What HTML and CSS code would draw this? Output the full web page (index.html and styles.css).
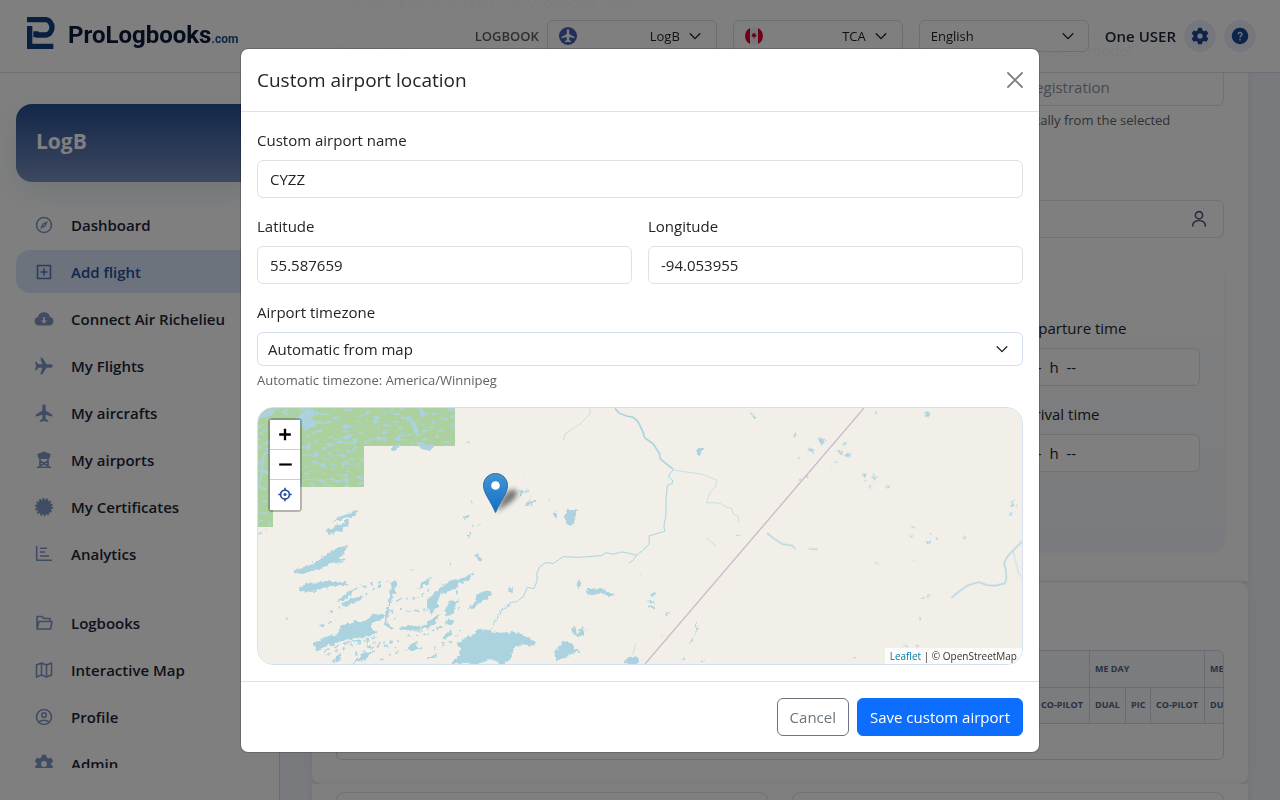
FILE: index.html
```html
<!DOCTYPE html>
<html lang="en">
<head>
<meta charset="utf-8">
<title>ProLogbooks.com – Add flight</title>
<link rel="stylesheet" href="styles.css">
</head>
<body>
<svg width="0" height="0" class="defs" aria-hidden="true">
  <symbol id="chev" viewBox="0 0 16 16"><path d="M2.500 5.500 8 11l5.500-5.500" fill="none" stroke="currentColor" stroke-width="1.600" stroke-linecap="round" stroke-linejoin="round"/></symbol>
  <symbol id="plane" viewBox="0 0 24 24"><path d="M14 8.900 22 14v2.500l-8-2.400V19l3 2v1.800L12 21.500 7 22.800V21l3-2v-4.900L2 16.500V14l8-5.100V3.500a2 2 0 0 1 4 0z" fill="currentColor"/></symbol>
  <symbol id="gear" viewBox="0 0 24 24"><path fill="currentColor" fill-rule="evenodd" d="M9.500 1h5l.8 3.300 2 1.200 3.300-1 2.500 4.300-2.500 2.400v1.600l2.500 2.400-2.500 4.300-3.300-1-2 1.200-.8 3.300h-5l-.8-3.300-2-1.200-3.300 1-2.500-4.300 2.500-2.400v-1.600L.9 8.800l2.500-4.300 3.300 1 2-1.200zM12 8.500a3.500 3.500 0 1 0 0 7 3.500 3.500 0 0 0 0-7z"/></symbol>
</svg>

<header class="topbar">
  <a class="brand" href="#" aria-label="ProLogbooks.com">
    <svg class="brand-mark" viewBox="78 48 90 102" aria-hidden="true"><path d="M81 59H136a20 23 0 0 1 0 46H108M108 94v18M89 78V139H160" fill="none" stroke="#123f80" stroke-width="16"/></svg>
    <span class="brand-name">ProLogbooks<span class="brand-tld">.com</span></span>
  </a>
  <div class="tools">
    <div class="picker">
      <span class="picker-label">LOGBOOK</span>
      <button class="drop" type="button">
        <svg class="flag" viewBox="0 0 18 18" aria-hidden="true"><circle cx="9" cy="9" r="9" fill="#4460b0"/><path d="M9 2c.8 0 1.200 1 1.200 2v3l5.300 3v1.300l-5.300-1.300v3l2 1.500v1L9 14.800l-3.200.7v-1l2-1.500v-3l-5.300 1.300V10l5.300-3V4c0-1 .4-2 1.200-2z" fill="#fff"/></svg>
        <span class="drop-text">LogB</span>
        <svg class="chev"><use href="#chev"/></svg>
      </button>
    </div>
    <button class="drop" type="button">
      <svg class="flag" viewBox="0 0 18 18" aria-hidden="true"><circle cx="9" cy="9" r="9" fill="#eef0f4"/><path d="M5 1a9 9 0 0 0 0 16zM13 1a9 9 0 0 1 0 16z" fill="#e0002a"/><path d="m9 5.500.8 1.300 1-.3-.2 1.300 1 .7-1.400 1.600-.9.1V12h-.6v-1.800l-.9-.1-1.400-1.600 1-.7-.2-1.300 1 .3z" fill="#e0002a"/></svg>
      <span class="drop-text">TCA</span>
      <svg class="chev"><use href="#chev"/></svg>
    </button>
    <span class="select-wrap">
      <select class="lang" aria-label="Language"><option>English</option></select>
      <svg class="chev"><use href="#chev"/></svg>
    </span>
    <div class="account">
      <span class="user">One USER</span>
      <button class="round" type="button" aria-label="Settings"><svg viewBox="0 0 24 24"><use href="#gear"/></svg></button>
      <button class="round" type="button" aria-label="Help"><svg viewBox="0 0 24 24"><circle cx="12" cy="12" r="11" fill="currentColor"/><path d="M9.500 9.700a2.500 2.500 0 1 1 3.800 2.200c-.9.500-1.300.9-1.300 2M12 16v2" stroke="#dfe6f6" stroke-width="2" fill="none"/></svg></button>
    </div>
  </div>
</header>

<div class="shell">
  <aside class="sidebar">
    <div class="book">LogB</div>
    <nav class="nav">
      <a href="#"><svg viewBox="0 0 20 20"><circle cx="10" cy="10" r="7.500" class="ln"/><path fill="currentColor" fill-rule="evenodd" d="m14 6-2.500 5.500L6 14l2.500-5.500zM10 9.200a.8.800 0 1 0 0 1.600.8.800 0 0 0 0-1.600z"/></svg>Dashboard</a>
      <a href="#" class="active"><svg viewBox="0 0 20 20"><path class="ln" d="M3.500 3.500h13v13h-13zM10 6.500v7M6.500 10h7"/></svg>Add flight</a>
      <a href="#"><svg viewBox="0 0 20 20"><path fill="currentColor" fill-rule="evenodd" d="M5 16.500a4.300 4.300 0 0 1-1-8.500 6.200 6.200 0 0 1 12 0 4.300 4.300 0 0 1-1 8.500zM9.200 8v3.500H7l3 3 3-3h-2.200V8z"/></svg>Connect Air Richelieu</a>
      <a href="#"><svg viewBox="0 0 24 24" class="east"><use href="#plane"/></svg>My Flights</a>
      <a href="#"><svg viewBox="0 0 24 24"><use href="#plane"/></svg>My aircrafts</a>
      <a href="#"><svg viewBox="0 0 20 20"><path fill="currentColor" d="M10 1.500 16.500 4v2L15 9H5L3.500 6V4zM3 16.500h14V18H3z"/><path class="ln" d="M6 9v8M14 9v8M6 11l8 5M14 11l-8 5"/></svg>My airports</a>
      <a href="#"><svg viewBox="0 0 20 20"><circle cx="10" cy="10" r="7.500" fill="currentColor"/><circle cx="10" cy="10" r="8" fill="none" stroke="currentColor" stroke-width="2" stroke-dasharray="2.100 1.490"/></svg>My Certificates</a>
      <a href="#"><svg viewBox="0 0 20 20"><path class="ln" d="M2.700 2v14.300H18M6 4.300h7M6 8h5M6 12h9"/></svg>Analytics</a>
      <a href="#" class="gap"><svg viewBox="0 0 20 20"><path class="ln" d="M3 16V3.500h5l2 2h6V8M3 16l2-7.500h13L16.500 16z"/></svg>Logbooks</a>
      <a href="#"><svg viewBox="0 0 20 20"><path class="ln" d="m2.500 5 5-2 5 2 5-2v12l-5 2-5-2-5 2zM7.500 3v12M12.500 5v12"/></svg>Interactive Map</a>
      <a href="#"><svg viewBox="0 0 20 20"><circle cx="10" cy="10" r="7.500" class="ln"/><circle cx="10" cy="8" r="2.300" class="ln"/><path class="ln" d="M5 15.500c1.500-3 8.500-3 10 0"/></svg>Profile</a>
      <a href="#"><svg viewBox="0 0 24 24"><use href="#gear"/></svg>Admin</a>
    </nav>
  </aside>

  <main class="main">
    <section class="card flight">
      <p class="intro">Shared fields that feed every logbook layout.</p>
      <div class="grid three">
        <div class="field"><label for="date">Flight date</label><input id="date" class="input" type="text"></div>
        <div class="field"><label for="type">Aircraft</label><input id="type" class="input" type="text"></div>
        <div class="field"><label for="reg">Registration, make / model</label><input id="reg" class="input" type="text" placeholder="Search by registration"><small>Filled automatically from the selected</small></div>
      </div>
      <div class="crew">
        <input class="input" type="text" aria-label="Crew member">
        <svg class="person" viewBox="0 0 20 20"><circle cx="10" cy="6.200" r="3.600" class="ln"/><path class="ln" d="M3.700 17.500v-1a6.300 5 0 0 1 12.600 0v1"/></svg>
      </div>
      <div class="panel">
        <div class="field"><label for="dep">Departure time</label><input id="dep" class="input" type="text" value="--  h  --"></div>
        <div class="field"><label for="arr">Arrival time</label><input id="arr" class="input" type="text" value="--  h  --"></div>
      </div>
    </section>
    <section class="card times">
      <div class="table-box">
        <table>
          <colgroup><col class="wide"><col class="dual"><col class="pic"><col class="co"><col class="dual"><col class="pic"><col class="co"><col class="dual"><col class="pic"><col class="co"></colgroup>
          <thead>
            <tr><th rowspan="2"></th><th colspan="3"></th><th colspan="3">ME DAY</th><th colspan="3">ME NIGHT</th></tr>
            <tr><th></th><th></th><th>CO-PILOT</th><th>DUAL</th><th>PIC</th><th>CO-PILOT</th><th>DUAL</th><th></th><th></th></tr>
          </thead>
          <tbody><tr><td colspan="10"></td></tr></tbody>
        </table>
      </div>
    </section>
    <section class="card notes">
      <div class="box"></div>
      <div class="box"></div>
    </section>
  </main>
</div>

<div class="backdrop">
  <div class="dialog" role="dialog" aria-modal="true" aria-labelledby="dlg-title">
    <div class="dialog-head">
      <h1 id="dlg-title">Custom airport location</h1>
      <button class="close" type="button" aria-label="Close"><svg viewBox="0 0 16 16"><path d="m1 1 14 14M15 1 1 15" stroke="#808080" stroke-width="1.800" stroke-linecap="round"/></svg></button>
    </div>
    <form class="dialog-body">
      <div class="field"><label for="name">Custom airport name</label><input id="name" class="input" type="text" value="CYZZ"></div>
      <div class="grid two">
        <div class="field"><label for="lat">Latitude</label><input id="lat" class="input" type="text" value="55.587659"></div>
        <div class="field"><label for="lng">Longitude</label><input id="lng" class="input" type="text" value="-94.053955"></div>
      </div>
      <div class="field">
        <label for="tz">Airport timezone</label>
        <span class="select-wrap tz">
          <select id="tz"><option>Automatic from map</option></select>
          <svg class="chev"><use href="#chev"/></svg>
        </span>
        <small>Automatic timezone: America/Winnipeg</small>
      </div>
      <div class="map">
        <svg class="tiles" viewBox="0 0 764 256" preserveAspectRatio="xMidYMid slice" role="img" aria-label="Map">
          <defs>
            <filter id="rough" x="-5%" y="-5%" width="110%" height="110%" color-interpolation-filters="sRGB"><feTurbulence type="fractalNoise" baseFrequency=".22" numOctaves="3" seed="4" result="n"/><feDisplacementMap in="SourceGraphic" in2="n" scale="6" xChannelSelector="R" yChannelSelector="G"/></filter>
            <filter id="ponds" x="0" y="0" width="100%" height="100%" color-interpolation-filters="sRGB"><feTurbulence type="fractalNoise" baseFrequency=".13 .24" numOctaves="4" seed="11"/><feColorMatrix values="0 0 0 0 .667  0 0 0 0 .827  0 0 0 0 .875  10 0 0 0 -5.800"/><feComposite in2="SourceGraphic" operator="in"/></filter>
            <linearGradient id="pin" x2="0" y2="1"><stop stop-color="#4496d0"/><stop offset="1" stop-color="#126fc6"/></linearGradient>
            <filter id="soft" x="-50%" y="-50%" width="200%" height="200%"><feGaussianBlur stdDeviation="2.500"/></filter>
          </defs>
          <rect width="764" height="256" fill="#f2efe9"/>
          <path d="M0 0H197V38H106V79H15V119H0z" fill="#add19e"/>
          <path d="M0 0H197V38H106V79H15V119H0z" fill="#aad3df" filter="url(#ponds)"/>
          <path d="M0 7 12 1 20 0 12 8 0 11zM36 12l10-9 6-3 6 6-6 5 7 3-2 5-14 0zM83 30l9-4 4 1-8 5zM152 14l3-3 6 11-3 5zM2 78l5-30 1-6-3 5-5 35z" fill="#aad3df"/>
          <g fill="#aad3df" stroke="#aad3df" stroke-linejoin="round" filter="url(#rough)">
            <g transform="translate(-8 -8) scale(.3333)" stroke-width="3">
              <path d="M245 365 285 342 320 335 318 345 290 352 262 360zM230 392l30-15 35-18-2 18-22 15-28 10z"/>
              <path d="M130 518 180 494 235 462 275 439 286 438 284 460 262 475 285 482 240 490 205 508 160 520zM150 568l20-16 45-5 50-3 30 8-35 4-45 8-40 14-20-4z"/>
              <path d="M423 150l15-14 18-2-15 12zM502 125l25 10 25 2-12 14-25-4zM426 548l10-7 7 6-7 20-8 20-4 24-8 8 4-30zM410 622l4-2 0 34-8 10zM408 665l5 8 14 10-4 3-16-9z"/>
              <path d="M535 600l15-20 30-22 25-16 40-8 22-16-12 22-30 14-25 18-30 12-6 16-6 26-18 14-4-20zM600 600l22 2-8 20-4 18-18 8-6-16zM655 625l20-20 8-22 25-10 15 8-15 18-20 10-10 10z"/>
              <path d="M445 685l30-8 40 6 30-25 20-10-12 22-35 20-40 0zM192 733l28-18 40-10 20-30 30-10 30 0 30-20 30-4 0 12-35 15-5 14 20 16-25 10-40 4-50 12-35 14-30 12z"/>
              <path d="M605 790l25-25 5-15-15-20 20-12 30-14 20-18 30 8 40 8 40 0 30 12 28 14-20 8-30-5-20 20-5 20-25 22-20-12-20-5-30 14zM590 660l20-2-2 12-16 0zM276 612l30-15 30-6-8 10-40 16zM262 606l40-32 14-6-38 36z"/>
              <path d="M475 745l14-18 8-3 3 22-8 6zM320 780l25-20 30-10-18 20-25 14zM250 786l12-18 10-2-8 18zM535 775l22-15-5 14zM580 712l24-20 2 6-20 18zM500 565l25-20 18-10-18 20-22 12zM640 352l16-6-6 8zM680 458l6 2 0 12-5-4zM684 474h8v6h-8zM654 402l6-4-4 12zM685 374l6-3zM485 506h6v3h-6zM654 125h6v3h-6zM107 652h5v6h-5z"/>
              <path fill="none" stroke-width="5" stroke-dasharray="12 17 7 13" d="M300 610 380 565 410 540M290 580 330 560 395 545M440 600 515 590 540 560M420 635 530 630 560 640M230 765 290 740 380 710M270 720 400 730 450 720M210 735 300 690M310 765 370 735 440 742M390 780 440 755 520 745M470 710 540 700 590 670M550 745 610 720 630 690M380 660 440 655M240 640 270 620M210 678 260 660M620 570 630 640"/>
              <path fill="none" stroke-width="4" stroke-dasharray="20 12" d="M220 755 280 730 350 720M310 790 350 750 390 730M20 405l30-16M640 465l5-3M600 495l4-6M668 375l8 4M660 300l12 10"/>
              <path fill="none" stroke-width="3" d="M722 695 735 660 755 630 780 612"/>
            </g>
            <g transform="translate(242 -8) scale(.3333)" stroke-width="3">
              <path d="M195 340l10-8 22 0-2 22-8 22-20-10zM160 345l6-8 6 3-4 13zM588 155l8-10 15 0-4 14-12 6zM232 545l6-4 4 16-6 8zM262 565l15 3 25-2 16 8 22 10-10 6-18-10-22 0-26 6zM376 785l5-10 22-5 12 6 0 16-40 0zM170 780l-3-25 15-20 15-15 10 10 12 2-2 15 20 6-20 4-12 12-15 5zM220 702l-4-12 12-6-2 10 14 12-4-18 16-6-4 28zM25 565l12 0 0 10-8 3zM76 318l8-10 4-9-2 14zM92 310l12-10-6 13zM446 618h16v4h-16zM446 606h6v3zM458 604l6 6zM454 580h8v6h-8zM498 642l10-7-3 8zM540 783l12-15-4 12zM752 38l14 12 0 3-12-8zM0 700l40-3 25 5 20 12 22 20-22 2-18-6-30 14-15 24-22 24z"/>
              <path fill="none" stroke-width="4" d="M588 665l4 20-6 22M580 712l-8 20M55 278l30-8M60 290l8-15M72 232h4M90 290h4M150 298v4M421 524v3M485 706v4M603 782h8M712 408h8"/>
            </g>
            <g transform="translate(502 -8) scale(.3333)" stroke-width="3">
              <path d="M494 40l6-2 6 5-5 10-6-3zM177 117l14-2 4 8-9 11-7-4zM146 145l18 6-8 7zM225 150l16 2 8 12-10-4zM256 166l10-3 6-9 2 8-8 10zM103 105l7 0-3 7zM112 174h10l-3 6zM308 220h5v7h-4zM338 232l10 2-4 6zM340 222h3v4h-3zM330 258h4v3h-4zM380 258h6v3h-6zM314 238h4v3h-4zM753 318l4-13 5-3-3 10zM768 316h3v4h-3zM749 342h5v5h-5zM503 423h7v6h-7zM528 413l6 2-3 3zM510 398h5v4h-5zM482 598l10-5zM500 590l12-4zM434 735h6v3h-6zM465 737h10v6h-5zM282 770h4v4h-4zM225 182h4v4h-4zM214 197h3v2h-3zM250 131h4v4h-4zM345 36h8v2h-8zM137 227h6v3h-6zM118 240h4v3h-4zM450 405h4v3h-4zM458 379h6v2h-6zM478 656h4v4h-4zM348 487h4v4h-4zM612 410h4v4h-4zM462 482h4z"/>
            </g>
          </g>
          <g fill="none" stroke="#aad3df" stroke-linejoin="round">
            <g transform="translate(242 -8) scale(.3333)">
              <path stroke-width="5" d="M345 25 358 40 380 48 400 52 414 65 430 98 433 112 460 132 478 160 482 178 520 208"/>
              <path stroke-width="3" d="M520 210 510 220 506 232 518 240 517 250 502 256 498 300 498 345 492 378 494 394 466 402 447 408 448 432 430 450 410 466 380 458 362 456 340 463 318 458 305 467 265 470 235 472 190 470 175 480 160 490 137 488 120 500 110 520 112 540 102 566 82 562 70 590 50 605 30 608 22 622 5 630 0 645M410 466 398 482 386 490"/>
              <path stroke-width="1.700" d="M270 25 270 42 240 72 195 102 190 122M520 210 560 216 605 222 650 240 648 258 628 282 620 308 640 308 660 310 680 322 695 324 700 342 715 350 716 366M620 415 650 440M408 730 398 765M800 400l10 5"/>
            </g>
            <g transform="translate(502 -8) scale(.3333)">
              <path stroke-width="4" d="M574 594 600 572 625 555 657 546 680 555 705 557 735 550 739 535 738 512 732 490 742 470 765 445 786 424"/>
              <path stroke-width="3.500" d="M22 400 45 418 70 433 95 436 107 448M145 446l28 2"/>
              <path stroke-width="2" d="M760 452 765 480 772 500 775 520 786 532"/>
            </g>
          </g>
          <path d="M606 0 387 256" stroke="#cdb9cc" stroke-width="1.300"/>
          <path d="m238 104 8-16q6-8 12-6 4 4-5 12z" fill="#222" opacity=".6" filter="url(#soft)"/>
          <path d="M237.500 65.500c6.700 0 12 5.300 12 12 0 8-7 15-12 27-5-12-12-19-12-27 0-6.700 5.300-12 12-12z" fill="url(#pin)" stroke="#2a6fa8"/>
          <circle cx="237.500" cy="77.500" r="4.300" fill="#fff"/>
        </svg>
        <div class="zoom">
          <button type="button" aria-label="Zoom in"><svg viewBox="0 0 30 30"><path d="M9 15h12M15 9v12" stroke="#000" stroke-width="2.400"/></svg></button>
          <button type="button" aria-label="Zoom out"><svg viewBox="0 0 30 30"><path d="M9 15h13" stroke="#000" stroke-width="2.200"/></svg></button>
          <button type="button" aria-label="Locate me"><svg viewBox="0 0 30 30"><g fill="none" stroke="#2a53a0" stroke-width="1.700"><circle cx="15" cy="15" r="4.600"/><path d="M15 8v3M15 19v3M8 15h3M19 15h3"/></g><circle cx="15" cy="15" r="1.600" fill="#2a53a0"/></svg></button>
        </div>
        <div class="credit"><a href="#">Leaflet</a> | © OpenStreetMap</div>
      </div>
    </form>
    <div class="dialog-foot">
      <button class="btn" type="button">Cancel</button>
      <button class="btn primary" type="submit">Save custom airport</button>
    </div>
  </div>
</div>
</body>
</html>
```
FILE: styles.css
```css
*, *::before, *::after { box-sizing: border-box; }
body {
  margin: 0;
  height: 100vh;
  overflow: hidden;
  background: #f1f4fb;
  color: #212529;
  font: 15px/24px "Segoe UI", "Open Sans", "Noto Sans", sans-serif;
}
button, input, select { font: inherit; color: inherit; }
.defs { position: absolute; }
.ln { fill: none; stroke: currentColor; stroke-width: 1.600; stroke-linejoin: round; }
.chev { width: 14px; height: 14px; flex: none; }

/* Top bar */
.topbar {
  position: fixed;
  inset: 0 0 auto 0;
  z-index: 2;
  height: 73px;
  padding: 0 24px;
  display: flex;
  align-items: center;
  justify-content: space-between;
  background: rgba(255, 255, 255, .96);
  border-bottom: 1px solid #dcdfe5;
}
.brand { display: flex; align-items: center; gap: 12px; padding-left: 2px; text-decoration: none; color: #0a1a3a; }
.brand-mark { width: 30px; height: 34px; margin-bottom: 6px; }
.brand-name { padding-top: 2px; font: bold 24px/36px "Roboto", sans-serif; }
.brand-tld { font-size: 12px; color: #1f4a8c; }
.tools { display: flex; align-items: center; gap: 16px; }
.picker { display: flex; align-items: center; gap: 8px; }
.picker-label { font-size: 13px; font-weight: 600; color: #5a5e66; }
.drop {
  width: 170px;
  height: 32px;
  padding: 0 14px 0 11px;
  display: flex;
  align-items: center;
  gap: 8px;
  font-size: 13px;
  background: #fff;
  border: 1px solid #d4deec;
  border-radius: 6px;
}
.flag { width: 18px; height: 18px; }
.drop-text { flex: 1; text-align: right; }
.select-wrap { position: relative; display: block; }
.select-wrap select { appearance: none; width: 100%; background: #fff; border: 1px solid #d4deec; border-radius: 6px; }
.select-wrap .chev { position: absolute; right: 14px; top: 50%; margin-top: -7px; pointer-events: none; }
.select-wrap .lang { width: 170px; height: 32px; padding: 0 11px; font-size: 13px; display: block; }
.account { display: flex; align-items: center; gap: 8px; }
.user { font-weight: 600; color: #1b2436; }
.round { width: 32px; height: 32px; padding: 7px; border: 0; border-radius: 50%; background: #eaeffb; color: #1d4795; }
.round svg { display: block; width: 18px; height: 18px; }

/* Sidebar */
.shell { display: flex; height: 100%; overflow: hidden; }
.sidebar {
  flex: none;
  width: 280px;
  padding: 104px 16px 32px;
  display: flex;
  flex-direction: column;
  background: #fff;
  border-right: 1px solid #d5dbe8;
}
.book {
  flex: none;
  padding: 23px 20px 27px;
  font-size: 21px;
  line-height: 28px;
  font-weight: 700;
  color: #fff;
  border-radius: 16px;
  background: linear-gradient(#264f92, #7b8fc0);
  box-shadow: 0 10px 30px rgba(40, 80, 150, .12);
}
.nav { flex: 1; min-height: 0; margin-top: 21px; overflow: hidden; display: flex; flex-direction: column; gap: 4px; }
.nav a {
  flex: none;
  height: 43px;
  padding: 0 18px;
  display: flex;
  align-items: center;
  gap: 17px;
  font-weight: 600;
  color: #1b2436;
  text-decoration: none;
  border-radius: 14px;
}
.nav svg { width: 20px; height: 20px; color: #8098c8; }
.nav .east { transform: rotate(90deg); }
.nav .active { background: #d9e6fa; color: #234f9c; }
.nav .active svg { color: #5878b4; }
.nav .gap { margin-top: 22px; }

/* Page behind the dialog, scrolled part-way down */
.main { flex: 1; min-width: 0; padding: 0 32px; margin-top: -10px; }
.card { background: #fff; padding: 0 24px; box-shadow: 0 2px 8px rgba(50, 70, 110, .1); }
.flight { height: 591px; }
.intro { margin: 0 0 24px; color: #6c757d; }
.grid { display: grid; gap: 16px; }
.two { grid-template-columns: 1fr 1fr; }
.three { grid-template-columns: repeat(3, 1fr); gap: 24px; }
.field { display: flex; flex-direction: column; }
.field label { margin-bottom: 8px; }
.three label { margin-bottom: 6px; }
.field small { margin-top: 4px; font-size: 13px; line-height: 21px; color: #5e6369; }
.input { width: 100%; height: 38px; padding: 0 12px; background: #fff; border: 1px solid #dee2e6; border-radius: 6px; }
.input::placeholder { color: #8b95a5; opacity: 1; }
.crew { position: relative; margin: 69px 0 28px; }
.crew .person { position: absolute; right: 15px; top: 9px; width: 20px; height: 20px; color: #4b5a78; }
.panel {
  padding: 50px 24px 78px 683px;
  display: grid;
  gap: 16px;
  border-radius: 10px;
  background: linear-gradient(#fff, #f4f7fc);
  box-shadow: 0 1px 4px rgba(50, 70, 110, .12);
}
.panel .input { white-space: pre; }
.times { padding: 68px 24px 24px; border-top: 1px solid #e4e7ec; border-radius: 10px; }
.table-box { height: 110px; overflow: hidden; border: 1px solid #d4dbe6; border-radius: 6px; }
table { table-layout: fixed; width: 982px; border-collapse: collapse; font-size: 9px; line-height: 12px; color: #55657f; }
.wide { width: 637px; }
.dual { width: 36px; }
.pic { width: 25px; }
.co { width: 54px; }
th { height: 36px; padding: 0 0 0 5px; text-align: left; white-space: nowrap; background: #f5f8fc; border: 1px solid #cfd9e8; border-top: 0; }
td { height: 36px; }
.notes { display: grid; grid-template-columns: 1fr 1fr; gap: 24px; padding-top: 8px; }
.box { height: 60px; border: 1px solid #dee2e6; border-radius: 8px; }

/* Dialog */
.backdrop { position: fixed; inset: 0; z-index: 5; display: flex; align-items: center; justify-content: center; background: rgba(0, 0, 0, .5); }
.dialog { width: 100%; max-width: 800px; background: #fff; background-clip: padding-box; border: 1px solid rgba(0, 0, 0, .18); border-radius: 8px; }
.dialog-head { display: flex; align-items: center; justify-content: space-between; padding: 16px; border-bottom: 1px solid #dee2e6; }
.dialog-head h1 { margin: 0; font-size: 19px; line-height: 30px; font-weight: 400; }
.close { padding: 0; border: 0; background: none; }
.close svg { display: block; width: 16px; height: 16px; }
.dialog-body { padding: 16px; display: grid; gap: 16px; }
.tz select { height: 34px; padding: 0 10px; display: block; }
.map { position: relative; height: 258px; overflow: hidden; border: 1px solid #d4e0ee; border-radius: 16px; }
.tiles { display: block; width: 100%; height: 100%; }
.zoom { position: absolute; left: 10px; top: 10px; border: 2px solid rgba(0, 0, 0, .25); border-radius: 4px; background-clip: padding-box; }
.zoom button { display: block; width: 30px; height: 30px; padding: 0; border: 0; border-bottom: 1px solid #ccc; background: #fff; }
.zoom button:last-child { border-bottom: 0; }
.zoom svg { display: block; width: 30px; height: 29px; }
.credit { position: absolute; right: 0; bottom: 0; padding: 0 5px; font-size: 10px; line-height: 16px; color: #333; background: rgba(255, 255, 255, .8); }
.credit a { color: #0078a8; text-decoration: none; }
.dialog-foot { display: flex; justify-content: flex-end; gap: 8px; padding: 16px; border-top: 1px solid #dee2e6; }
.btn { height: 38px; padding: 0 12px; border: 1px solid #6c757d; border-radius: 6px; background: #fff; color: #6c757d; }
.btn.primary { background: #0d6efd; border-color: #0d6efd; color: #fff; }
```
